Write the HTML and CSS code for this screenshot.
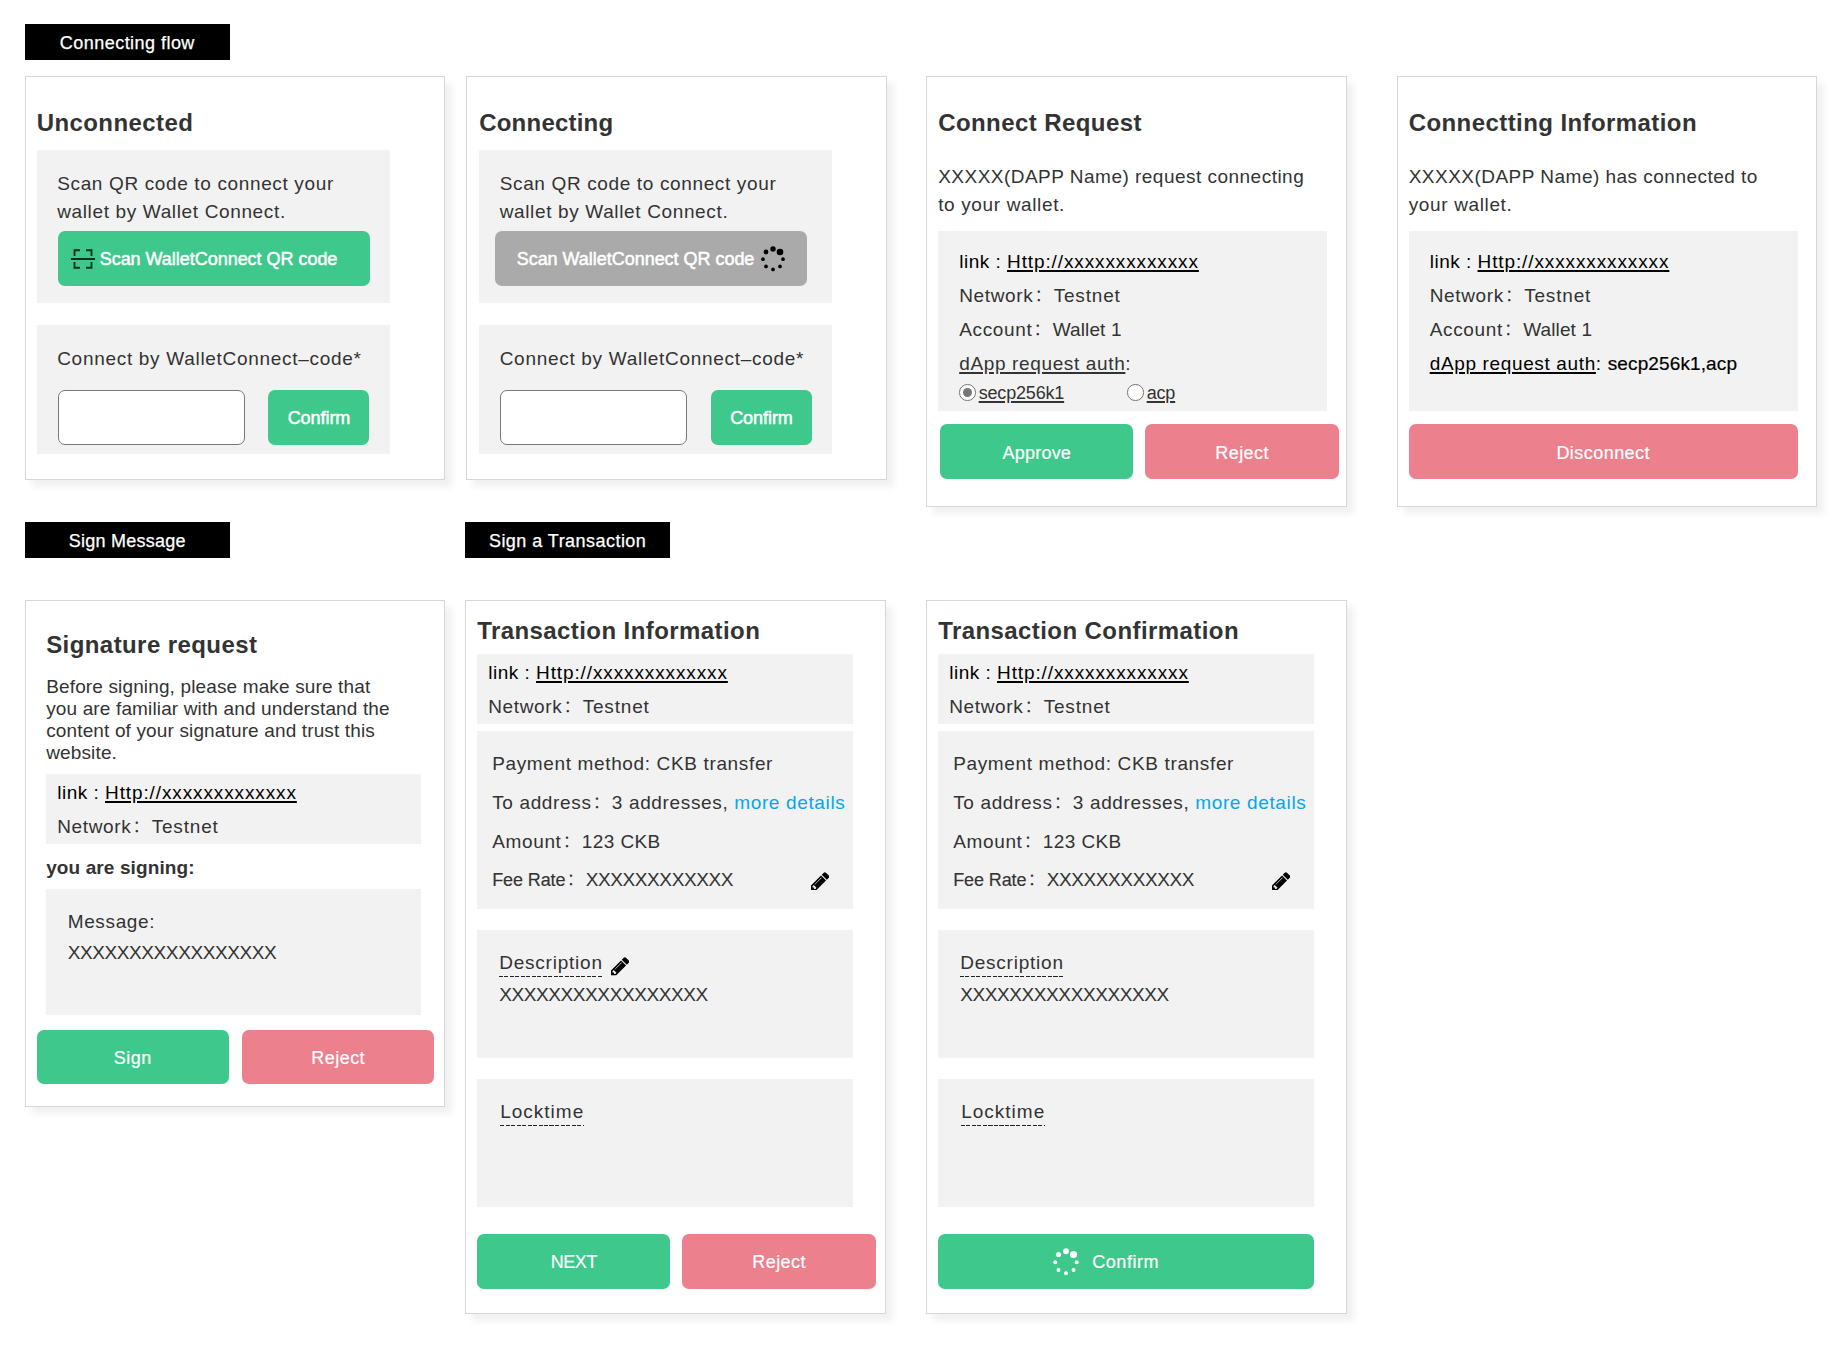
FILE: index.html
```html
<!DOCTYPE html>
<html lang="en">
<head>
<meta charset="utf-8">
<title>Wallet connect flow</title>
<link rel="stylesheet" href="styles.css">
</head>
<body>
<svg class="defs" aria-hidden="true">
  <symbol id="scan" viewBox="0 0 24 20">
    <path d="M3.5 7V1.2H9M15 1.2h5.5V7M3.5 13v5.8H9M15 18.800h5.500V13M0 10h24" fill="none" stroke="currentColor" stroke-width="1.900"/>
  </symbol>
  <symbol id="spinner" viewBox="0 0 24 26">
    <circle cx="12" cy="3" r="2.700"/><circle cx="19" cy="6" r="3.300"/><circle cx="22" cy="13.200" r="1.850"/><circle cx="19" cy="20.400" r="1.850"/>
    <circle cx="12" cy="23.400" r="1.850"/><circle cx="5" cy="20.400" r="1.850"/><circle cx="2" cy="13.200" r="1.850"/><circle cx="5" cy="6" r="2.400"/>
  </symbol>
  <symbol id="pencil" viewBox="0 0 1536 1536">
    <path fill-rule="evenodd" d="M363 1408l91-91-235-235-91 91v107h128v128h107zM886 480q0-22-22-22-10 0-17 7L305 1007q-7 7-7 17 0 22 22 22 10 0 17-7L879 497q7-7 7-17zM832 288l416 416-832 832H0v-416zM1515 384q0 53-37 90l-166 166L896 224l166-165q36-38 90-38 53 0 91 38l235 234q37 39 37 91z"/>
  </symbol>
</svg>

<main>
  <div class="tags"><h2 class="tag">Connecting flow</h2></div>

  <section class="row row-top">
    <article class="card card-connect">
      <h3>Unconnected</h3>
      <div class="box scan-box">
        <p>Scan QR code to connect your<br>wallet by Wallet Connect.</p>
        <button class="btn scan-btn"><svg class="scan-icon"><use href="#scan"/></svg>Scan WalletConnect QR code</button>
      </div>
      <div class="box code-box">
        <p class="code-label">Connect by WalletConnect–code*</p>
        <div class="code-row"><input type="text" aria-label="WalletConnect code"><button class="btn code-btn">Confirm</button></div>
      </div>
    </article>

    <article class="card card-connect second">
      <h3 class="tight-title">Connecting</h3>
      <div class="box scan-box">
        <p>Scan QR code to connect your<br>wallet by Wallet Connect.</p>
        <button class="btn scan-btn busy">Scan WalletConnect QR code<svg class="spinner"><use href="#spinner"/></svg></button>
      </div>
      <div class="box code-box">
        <p class="code-label">Connect by WalletConnect–code*</p>
        <div class="code-row"><input type="text" aria-label="WalletConnect code"><button class="btn code-btn">Confirm</button></div>
      </div>
    </article>

    <article class="card card-request">
      <h3>Connect Request</h3>
      <p class="intro"><span class="name">XXXXX(DAPP Name) request connecting</span><br>to your wallet.</p>
      <div class="box info-box">
        <p class="link">link : <a>Http://xxxxxxxxxxxxx</a></p>
        <p>Network<i>：</i><span class="testnet">Testnet</span></p>
        <p>Account<i>：</i><span class="plain">Wallet 1</span></p>
        <p><u>dApp request auth</u>:</p>
        <div class="radios">
          <label><span class="radio on"></span><u>secp256k1</u></label>
          <label><span class="radio"></span><u>acp</u></label>
        </div>
      </div>
      <div class="actions"><button class="btn approve">Approve</button><button class="btn red">Reject</button></div>
    </article>

    <article class="card card-request fourth">
      <h3>Connectting Information</h3>
      <p class="intro"><span class="name">XXXXX(DAPP Name) has connected to</span><br>your wallet.</p>
      <div class="box info-box">
        <p class="link">link : <a>Http://xxxxxxxxxxxxx</a></p>
        <p>Network<i>：</i><span class="testnet">Testnet</span></p>
        <p>Account<i>：</i><span class="plain">Wallet 1</span></p>
        <p class="black"><u>dApp request auth</u>: <span class="auth">secp256k1,acp</span></p>
      </div>
      <div class="actions single"><button class="btn red">Disconnect</button></div>
    </article>
  </section>

  <div class="tags tags-sign"><h2 class="tag tight-tag">Sign Message</h2><h2 class="tag">Sign a Transaction</h2></div>

  <section class="row row-bottom">
    <article class="card card-sign">
      <h3>Signature request</h3>
      <p class="notice">Before signing, please make sure that<br>you are familiar with and understand the<br>content of your signature and trust this<br>website.</p>
      <div class="box link-box">
        <p class="link">link : <a>Http://xxxxxxxxxxxxx</a></p>
        <p>Network<i>：</i><span class="testnet">Testnet</span></p>
      </div>
      <h4>you are signing:</h4>
      <div class="box message-box"><p>Message:</p><p class="xs">XXXXXXXXXXXXXXXXX</p></div>
      <div class="actions"><button class="btn">Sign</button><button class="btn red">Reject</button></div>
    </article>

    <article class="card card-tx">
      <h3>Transaction Information</h3>
      <div class="box link-box">
        <p class="link">link : <a>Http://xxxxxxxxxxxxx</a></p>
        <p>Network<i>：</i><span class="testnet">Testnet</span></p>
      </div>
      <div class="box pay-box">
        <p>Payment method: CKB transfer</p>
        <p>To address<i>：</i>3 addresses, <a class="more">more details</a></p>
        <p>Amount<i>：</i><span class="amount">123 CKB</span></p>
        <p class="fee"><span><span class="fee-label">Fee Rate</span><i>：</i><span class="xs">XXXXXXXXXXXX</span></span><svg class="pencil"><use href="#pencil"/></svg></p>
      </div>
      <div class="box note-box"><p class="note-head"><span class="dashed">Description</span><svg class="pencil"><use href="#pencil"/></svg></p><p class="xs">XXXXXXXXXXXXXXXXX</p></div>
      <div class="box note-box lock"><p class="note-head"><span class="dashed">Locktime</span></p></div>
      <div class="actions"><button class="btn next">NEXT</button><button class="btn red">Reject</button></div>
    </article>

    <article class="card card-tx third">
      <h3>Transaction Confirmation</h3>
      <div class="box link-box">
        <p class="link">link : <a>Http://xxxxxxxxxxxxx</a></p>
        <p>Network<i>：</i><span class="testnet">Testnet</span></p>
      </div>
      <div class="box pay-box">
        <p>Payment method: CKB transfer</p>
        <p>To address<i>：</i>3 addresses, <a class="more">more details</a></p>
        <p>Amount<i>：</i><span class="amount">123 CKB</span></p>
        <p class="fee"><span><span class="fee-label">Fee Rate</span><i>：</i><span class="xs">XXXXXXXXXXXX</span></span><svg class="pencil"><use href="#pencil"/></svg></p>
      </div>
      <div class="box note-box"><p class="note-head"><span class="dashed">Description</span></p><p class="xs">XXXXXXXXXXXXXXXXX</p></div>
      <div class="box note-box lock"><p class="note-head"><span class="dashed">Locktime</span></p></div>
      <div class="actions single"><button class="btn loading"><svg class="spinner"><use href="#spinner"/></svg>Confirm</button></div>
    </article>
  </section>
</main>
</body>
</html>
```
FILE: styles.css
```css
* { box-sizing: border-box; }
body {
  margin: 0;
  background: #fff;
  color: #333;
  font: 19px/28px "Liberation Sans", "Noto Sans CJK SC", sans-serif;
  letter-spacing: .64px;
}
h2, h3, h4, p { margin: 0; white-space: nowrap; }
.defs { position: absolute; width: 0; height: 0; }
main { min-height: 1360px; padding: 24px 0 0 24.700px; }

/* Section labels */
.tags { display: flex; gap: 235px; }
.tag {
  width: 205.300px; height: 36px;
  background: #000; color: #fff;
  font-size: 18px; font-weight: 400; line-height: 39px;
  text-align: center; letter-spacing: .46px;
  -webkit-text-stroke: .25px #fff;
}
.tight-tag { letter-spacing: .24px; }
.tags-sign { margin-top: 15.300px; }

/* Cards */
.row { display: grid; align-items: start; }
.row-top { grid-template-columns: 441.500px 460px 470.500px 421px; margin-top: 15.500px; }
.row-bottom { grid-template-columns: 440.500px 461px 421px; margin-top: 41.500px; }
.card {
  display: flex; flex-direction: column; align-items: flex-start;
  width: 420.600px;
  background: #fff;
  border: 1px solid #d7d7d7;
  box-shadow: 7px 7px 7px rgba(0, 0, 0, .06);
}
.card h3 { font-size: 24px; line-height: 28px; letter-spacing: .42px; }
.card .tight-title { letter-spacing: .22px; }
.box { background: #f2f2f2; }

/* Buttons */
.btn {
  display: flex; align-items: center; justify-content: center;
  height: 55px; padding: 0;
  border: 0; border-radius: 7px;
  background: #3ec88b; color: #fff;
  font: 18px "Liberation Sans", sans-serif; letter-spacing: .45px;
  -webkit-text-stroke: .2px #fff;
}
.btn.red { background: #ec808d; }
.btn.approve { letter-spacing: .21px; }
.btn.next { letter-spacing: -.44px; }
.spinner { width: 24px; height: 26px; fill: currentColor; stroke: none; }
.pencil { width: 18.500px; height: 18.500px; fill: #000; }
.actions { display: flex; gap: 12px; padding-top: 2px; }
.actions .btn { width: 193.300px; padding-top: 3px; }

/* Unconnected / Connecting */
.card-connect { height: 404.500px; padding: 32px 11px 0; }
.card-connect.second { padding-left: 12px; }
.card-connect .box { width: 353px; padding: 19.500px 0 0 21px; }
.scan-box { height: 153px; margin-top: 13.500px; }
.scan-box p, .code-label { margin-left: -.5px; }
.scan-btn {
  width: 312px; margin-top: 5.500px; padding: 1px 0 0 13px; gap: 5px;
  justify-content: flex-start;
  letter-spacing: -.03px;
  -webkit-text-stroke: .5px #fff;
}
.scan-btn.busy { margin-left: -5.500px; padding-left: 22px; gap: 7px; background: #aaa; }
.scan-btn.busy .spinner { color: #000; }
.scan-icon { width: 24px; height: 20px; color: #00331c; }
.code-box { height: 128.500px; margin-top: 22px; }
.code-label { letter-spacing: .7px; }
.code-row { display: flex; gap: 23.500px; margin-top: 17.500px; }
.code-row input {
  width: 187.300px; height: 55px;
  border: 1px solid #797979; border-radius: 7px; background: #fff;
}
.code-btn { width: 101px; padding-top: 1px; letter-spacing: -.05px; -webkit-text-stroke: .5px #fff; }

/* Connection details */
.card-request { height: 431.500px; padding: 32px 11px 0; }
.intro { margin-top: 26.500px; }
.name { letter-spacing: .48px; }
.info-box { width: 389px; height: 179.500px; margin-top: 12px; padding: 13.800px 0 0 21px; }
.info-box p, .link-box p { line-height: 34.200px; }
.card-request .actions { margin: 11.500px 0 0 2px; }
.card-request .actions.single { margin-left: 0; }
.card-request .single .btn { width: 389px; }
i {
  display: inline-block; width: 20.300px; height: 1em; padding-left: 1.500px;
  font-size: 16px; font-style: normal; line-height: 1em; letter-spacing: 0;
  vertical-align: 1px;
}
.link, .black { color: #000; }
.link { letter-spacing: .5px; }
.link a { letter-spacing: .88px; }
.link a, u { text-decoration: underline; text-decoration-thickness: 1.500px; text-underline-offset: 2px; }
.testnet { letter-spacing: .82px; }
.plain { letter-spacing: .13px; }
.auth { letter-spacing: .12px; -webkit-text-stroke: .2px #000; }
.radios { display: flex; align-items: center; height: 23px; font-size: 18px; letter-spacing: -.18px; }
.radios label { display: flex; align-items: center; gap: 3px; width: 168px; }
.radio {
  display: grid; place-items: center;
  width: 16.500px; height: 16.500px; margin-bottom: 1px;
  border: 1px solid #767676; border-radius: 50%; background: #fff;
}
.radio.on::before { content: ""; width: 9px; height: 9px; border-radius: 50%; background: #767676; }

/* Signature request */
.card-sign { height: 507.500px; padding: 30.500px 0 0 20.500px; }
.notice { margin-top: 16.300px; line-height: 22px; letter-spacing: .14px; }
.link-box { height: 70px; padding: 1.800px 0 0 11px; }
.card-sign .box { width: 375px; }
.card-sign .link-box { margin-top: 10.200px; }
.card-sign h4 { margin-top: 10.500px; font-size: 19px; letter-spacing: .11px; }
.message-box { height: 125.500px; margin-top: 7px; padding: 18px 0 0 21.500px; line-height: 30.700px; }
.xs { letter-spacing: -.4px; }
.card-sign .actions { gap: 13.500px; margin: 13px 0 0 -9.500px; }
.card-sign .actions .btn { width: 192px; height: 54px; }

/* Transactions */
.card-tx { height: 714px; padding: 16px 0 0 11px; }
.card-tx .box { width: 376px; }
.card-tx .link-box { margin-top: 9.700px; }
.card-tx .pay-box { height: 178px; margin-top: 7px; padding: 13.500px 0 0 15px; line-height: 38.800px; }
.more { letter-spacing: .64px; color: #02a7f0; }
.amount { letter-spacing: .4px; }
.fee { display: flex; align-items: center; width: 337px; justify-content: space-between; }
.fee-label { font-size: 18px; letter-spacing: -.1px; -webkit-text-stroke: .15px; }
.note-box { height: 128px; margin-top: 21px; padding: 19px 0 0 22px; }
.note-head { display: flex; align-items: flex-start; height: 32px; gap: 8px; }
.note-head .pencil { margin-top: 8px; }
.dashed {
  height: 28px;
  letter-spacing: .78px;
  background: repeating-linear-gradient(90deg, #222 0 4px, transparent 4px 5.500px) left bottom / 100% 1.500px no-repeat;
}
.lock { padding-left: 23px; }
.lock .dashed { letter-spacing: 1px; }
.card-tx .actions { margin-top: 24.500px; }
.card-tx .single .btn { width: 376px; }
.actions .loading { gap: 13px; padding-right: 40px; letter-spacing: .55px; }
.loading .spinner { width: 26px; height: 28px; margin-top: -2px; }
```
